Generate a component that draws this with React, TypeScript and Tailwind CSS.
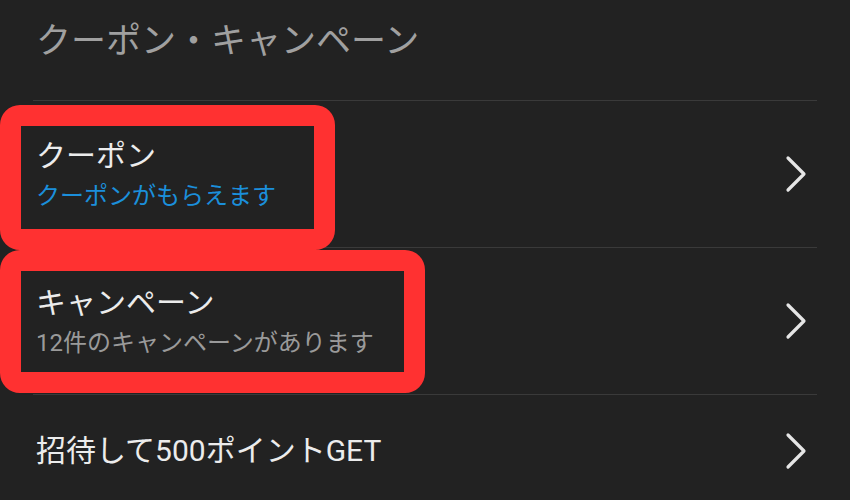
import React from "react";

const Chevron = () => (
  <svg width="22" height="38" viewBox="0 0 22 38" fill="none" className="shrink-0">
    <polyline
      points="3,3 19,19 3,35"
      stroke="#e6e6e6"
      strokeWidth="3.2"
      strokeLinecap="round"
      strokeLinejoin="round"
    />
  </svg>
);

type Item = { title: string; sub?: string; subColor?: string };

const items: Item[] = [
  { title: "クーポン", sub: "クーポンがもらえます", subColor: "text-[#1b8fdb]" },
  { title: "キャンペーン", sub: "12件のキャンペーンがあります", subColor: "text-[#9a9a9a]" },
  { title: "招待して500ポイントGET" },
];

const App = () => {
  return (
    <div
      className="relative w-[850px] h-[500px] overflow-hidden bg-[#222222]"
      style={{ fontFamily: "Roboto, 'Noto Sans CJK JP', sans-serif" }}
    >
      {/* header */}
      <div className="mx-[33px] h-[101px] border-b border-[#3a3a3a] pl-[3px] pt-[21px]">
        <h1 className="text-[35px] leading-[42px] text-[#a0a0a0]">クーポン・キャンペーン</h1>
      </div>

      {/* menu rows */}
      <ul>
        {items.map((item) => (
          <li
            key={item.title}
            className={`mx-[33px] border-b border-[#3a3a3a] flex items-center justify-between pl-[3px] pr-[10px] ${
              item.sub ? "h-[147px]" : "h-[113px]"
            }`}
          >
            <div className="flex flex-col gap-[5px]">
              <span className="text-[30px] leading-[38px] text-[#ececec]">{item.title}</span>
              {item.sub && (
                <span className={`text-[24px] leading-[32px] ${item.subColor}`}>{item.sub}</span>
              )}
            </div>
            <Chevron />
          </li>
        ))}
      </ul>

      {/* annotation boxes */}
      <div className="absolute left-0 top-[105px] w-[335px] h-[145px] rounded-[20px] border-[21px] border-[#ff3131]" />
      <div className="absolute left-0 top-[250px] w-[425px] h-[143px] rounded-[20px] border-[21px] border-[#ff3131]" />
    </div>
  );
};

export default App;
